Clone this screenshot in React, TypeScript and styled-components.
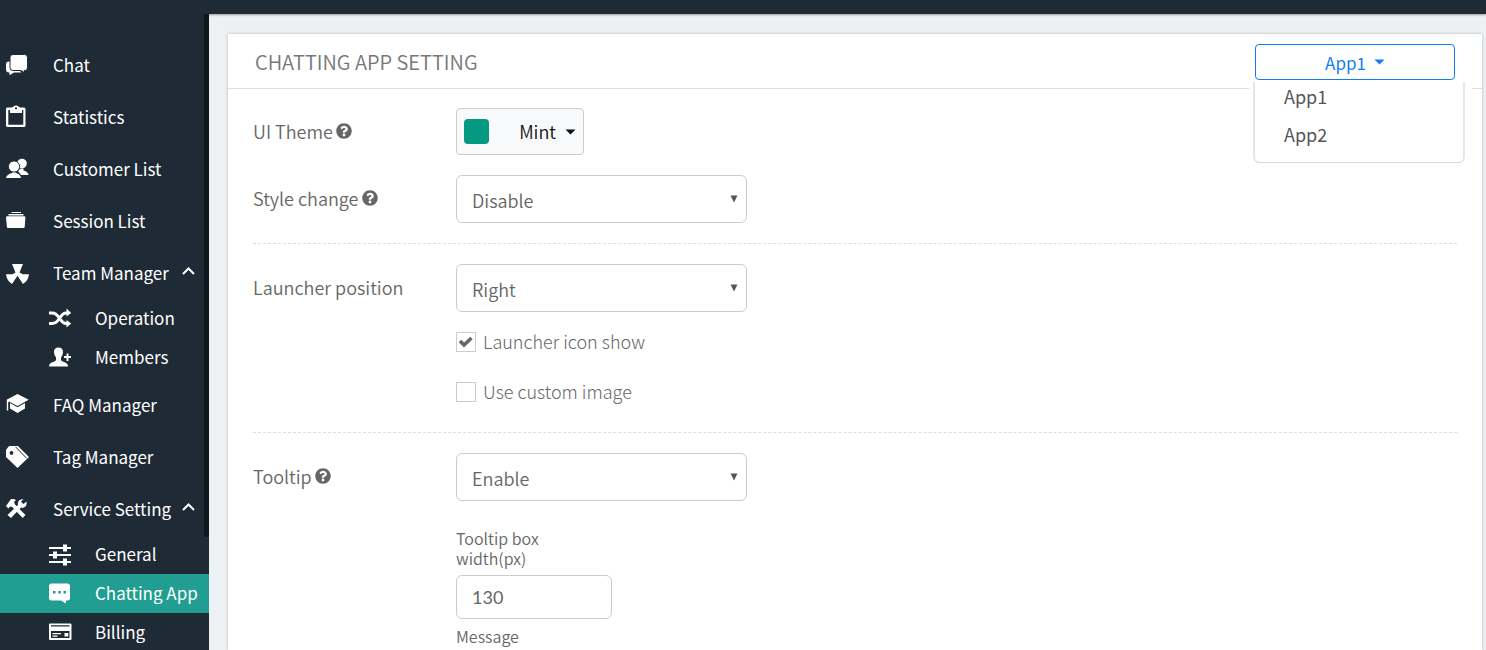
import React, { useState } from 'react';
import styled, { createGlobalStyle, css } from 'styled-components';
import { FaQuestionCircle } from 'react-icons/fa';

const GlobalStyle = createGlobalStyle`
  *, *::before, *::after { box-sizing: border-box; }
  html, body { margin: 0; padding: 0; }
  body {
    background: #edf1f3;
    color: #666;
    font-family: 'Noto Sans CJK KR', 'Noto Sans', sans-serif;
    overflow: hidden;
  }
  button, input, select { font-family: inherit; margin: 0; }
`;

const Page = styled.div`
  display: flex;
  flex-direction: column;
  height: 100vh;
  overflow: hidden;
`;

const TopBar = styled.header`
  flex: none;
  height: 14px;
  background: #1e2a35;
  box-shadow: 0 1px 2px rgba(0, 0, 0, 0.35);
`;

const Body = styled.div`
  display: flex;
  flex: 1;
  min-height: 0;
`;

const Sidebar = styled.nav`
  position: relative;
  flex: none;
  width: 209px;
  padding-top: 25px;
  background: #1e2a35;
  overflow: hidden;
`;

const ScrollThumb = styled.div`
  position: absolute;
  top: 0;
  right: 0;
  width: 5px;
  height: 523px;
  background: #10181f;
`;

const NavList = styled.ul`
  margin: 0;
  padding: 0;
  list-style: none;
`;

const SubList = styled(NavList)`
  padding-bottom: 2px;
`;

const NavText = styled.span`
  flex: 1;
  margin-left: 24px;
`;

const NavLink = styled.a<{ $sub?: boolean; $active?: boolean }>`
  display: flex;
  align-items: center;
  height: ${(p) => (p.$sub ? 39 : 52)}px;
  padding: 0 14px 0 ${(p) => (p.$sub ? 48 : 5)}px;
  background: ${(p) => (p.$active ? '#219e91' : 'transparent')};
  color: #fff;
  font-size: 17px;
  line-height: 24px;
  white-space: nowrap;
  text-decoration: none;

  svg { flex: none; }

  ${NavText} {
    margin-left: ${(p) => (p.$sub ? 23 : 24)}px;
    padding-bottom: ${(p) => (p.$sub ? 2 : 0)}px;
  }
`;

const Main = styled.main`
  display: flex;
  flex: 1;
  min-width: 0;
  padding: 20px 4px 0 19px;
`;

const Card = styled.section`
  flex: 1;
  min-width: 0;
  background: #fff;
  box-shadow: 0 0 3px rgba(0, 0, 0, 0.25);
`;

const CardHeader = styled.header`
  display: flex;
  align-items: center;
  justify-content: space-between;
  height: 55px;
  padding: 2px 27px 0;
  border-bottom: 1px solid #ddd;
`;

const Title = styled.h1`
  margin: 0;
  color: #777;
  font-size: 20px;
  font-weight: 350;
  line-height: 30px;
`;

const Picker = styled.div`
  position: relative;
  width: 200px;
`;

const PickerButton = styled.button`
  display: flex;
  align-items: center;
  justify-content: center;
  gap: 8px;
  width: 100%;
  height: 36px;
  padding: 0;
  border: 1px solid #0f7dfa;
  border-radius: 4px;
  background: #fff;
  color: #0f7dfa;
  font-size: 17px;
`;

const MenuBackdrop = styled.div`
  position: absolute;
  top: 38px;
  left: -6px;
  right: -17px;
  padding: 0 7px 0 4px;
  background: #fff;
`;

const Menu = styled.ul`
  margin: 0;
  padding: 0 0 4px;
  border: solid #e6e6e6;
  border-width: 0 2px 1px;
  border-bottom-color: #d8d8d8;
  border-radius: 0 0 6px 6px;
  list-style: none;
`;

const MenuItem = styled.button`
  display: block;
  width: 100%;
  height: 38px;
  padding: 0 29px 10px;
  border: 0;
  background: none;
  color: #555;
  font-size: 18px;
  line-height: 28px;
  text-align: left;
`;

const Section = styled.div`
  display: flex;
  flex-direction: column;
  gap: 20px;
  margin: 0 25px;
  padding: 20px 0;
  border-bottom: 1px dashed #ddd;

  &:first-of-type { padding-top: 19px; }
  &:last-child { border-bottom: 0; }
`;

const Row = styled.div`
  display: flex;
  align-items: flex-start;
`;

const RowLabel = styled.label`
  display: flex;
  align-items: center;
  gap: 3px;
  flex: none;
  width: 203px;
  height: 46px;
  font-size: 18px;
  font-weight: 350;
`;

const Controls = styled.div`
  display: flex;
  flex-direction: column;
  align-items: flex-start;
`;

const ThemeButton = styled.button`
  display: flex;
  align-items: center;
  width: 128px;
  height: 47px;
  padding: 0 7px;
  border: 1px solid #ccc;
  border-radius: 4px;
  background: #f8f9fb;
  color: #111;
  font-size: 18px;
  font-weight: 350;
`;

const Swatch = styled.span`
  width: 25px;
  height: 25px;
  margin-right: auto;
  border-radius: 4px;
  background: #049a81;
`;

const ThemeName = styled.span`
  margin-right: 9px;
  padding-bottom: 1px;
`;

const field = css`
  border: 1px solid #ccc;
  border-radius: 6px;
  background: #fff;
  color: #666;
  font-size: 18px;
  font-weight: 350;
`;

const SelectWrap = styled.div`
  position: relative;
  width: 291px;

  svg {
    position: absolute;
    top: 20px;
    right: 9px;
    pointer-events: none;
  }
`;

const Select = styled.select`
  ${field}
  appearance: none;
  display: block;
  width: 100%;
  height: 48px;
  padding: 1px 30px 0 15px;
`;

const CheckLabel = styled.label`
  display: flex;
  align-items: center;
  gap: 7px;
  height: 20px;
  margin-top: 20px;
  font-size: 18px;
  font-weight: 300;

  & + & {
    margin-top: 30px;
    margin-bottom: 10px;
  }
`;

const CheckText = styled.span`
  padding-bottom: 2px;
`;

const CheckBox = styled.span`
  display: grid;
  width: 20px;
  height: 20px;

  & > * { grid-area: 1 / 1; }
  svg { pointer-events: none; }
`;

const CheckInput = styled.input`
  appearance: none;
  width: 20px;
  height: 20px;
  border: 1px solid #ccc;
  background: #fff;

  & + svg { visibility: hidden; }
  &:checked + svg { visibility: visible; }
`;

const FieldLabel = styled.label`
  width: 130px;
  font-size: 16px;
  font-weight: 350;
  line-height: 20px;
`;

const TextInput = styled.input`
  ${field}
  width: 156px;
  height: 44px;
  margin: 7px 0;
  padding: 0 15px;
  font-family: Lato, sans-serif;
  font-weight: 400;
`;

const TooltipFields = styled.div`
  display: flex;
  flex-direction: column;
  margin-top: 27px;
`;

const glyphs = {
  chat: (
    <>
      <path d="M4 8.500H12V18H15L16.500 19.500H9L4.500 22.300V19.500H4Q1 19.500 1 16.500V11.500Q1 8.500 4 8.500Z" />
      <path
        d="M8 1.500H19.500Q22.500 1.500 22.500 4.500V14.500Q22.500 17 20.500 17.500H19V20.500Q18 17.500 15 17.500H8Q5 17.500 5 14.500V4.500Q5 1.500 8 1.500Z"
        stroke="#1e2a35"
      />
    </>
  ),
  clipboard: (
    <path
      fillRule="evenodd"
      d="M2.500 2.500H7L8.500 1.500Q11 -.5 13.500 1.500L15 2.500H19Q20.500 2.500 20.500 4V20.500Q20.500 22 19 22H2.500Q1 22 1 20.500V4Q1 2.500 2.500 2.500ZM3.300 5V19.700H18.300V5H17V8H5V5ZM11 2.200A1.100 1.100 0 1 0 11 4.400A1.100 1.100 0 1 0 11 2.200Z"
    />
  ),
  people: (
    <>
      <circle cx="17" cy="6.500" r="4.800" />
      <path d="M15.500 11.500H18.500V13.500Q23.500 15 23.500 18H16L13 14Z" />
      <g stroke="#1e2a35" strokeWidth="1">
        <path d="M7 13.500H11V15.500Q16 17 16.500 21.500H.5Q1 17 7 15.500Z" />
        <circle cx="9" cy="9.500" r="5.600" />
      </g>
    </>
  ),
  folder: (
    <path d="M6.500 3H16V4H6.500ZM3.500 5H18.500V6.500H3.500ZM2.500 7.300H19.500Q20.500 7.300 20.400 8.500L19.700 18Q19.600 19 18.700 19H3Q2 19 1.900 18L1 8.500Q1 7.300 2.500 7.300Z" />
  ),
  nuclear: (
    <>
      <path d="M7 3H18L14.500 11.500L18 13.300H24Q23.500 19.500 18 23L12.500 14.800L7 23Q1.500 19.500 1 13.300H7.500L10.500 11.500Z" />
    </>
  ),
  shuffle: (
    <>
      <path d="M1 6H4Q8 6 11 10.500L12.500 12.500Q15 16.500 18 16.500H20M1 16.500H4Q8 16.500 11 12L12.500 10Q15 6 18 6H20" fill="none" stroke="currentColor" strokeWidth="3" />
      <path d="M18.500 1.500L23.200 6L18.500 9.500ZM18.500 13L23.200 16.500L18.500 20.500Z" />
    </>
  ),
  personAdd: (
    <path d="M10.500 1.500Q15 1.500 15 6Q15 9 13 11.500V14Q13 15 16 16Q20 17.300 20 20.500H1Q1 17.300 5 16Q8 15 8 14V11.500Q6 9 6 6Q6 1.500 10.500 1.500ZM18.500 7.500H20.500V10H23V12H20.500V15H18.500V12H16V10H18.500Z" />
  ),
  school: (
    <>
      <path d="M12.500 1L23.700 6.700L12.500 13L4 8.500L3.200 9.500V17.500H1.800V7.500L1.500 6.700Z" />
      <path d="M5 10L12.500 14.300L20 10V15.500L12.500 20L5 15.500Z" />
    </>
  ),
  tag: (
    <>
      <path fillRule="evenodd" d="M4 1H13L24 12L12.500 23L1 12V5ZM6.500 6A1.900 1.900 0 1 0 6.500 9.800A1.900 1.900 0 1 0 6.500 6Z" />
      <path d="M10.500 1.800L21.700 13.300" fill="none" stroke="#1e2a35" strokeWidth="1" />
    </>
  ),
  tools: (
    <>
      <path d="M6 2Q9 1.500 11 3L9 5L10 7.500L20.500 18L17.700 21L7.200 10L5 9.500L3.500 11.500L1 9Z" />
      <path d="M18.500 2L16 4.700L18.500 7L21.500 4.500Q22.500 9 19 10.500Q17.500 11 16 10.500L6 21L2.500 18L13 8Q12 2.500 18.500 2Z" />
    </>
  ),
  options: (
    <path d="M1 4H15V1.500H19V4H23V6H19V8.500H15V6H1ZM1 11H5V8.500H9V11H23V13H9V15.500H5V13H1ZM1 18H15V15.500H19V18H23V20H19V22.500H15V20H1Z" />
  ),
  chatbox: (
    <path
      fillRule="evenodd"
      d="M3.500 1.500H19.500Q22 1.500 22 4V16Q22 18.500 19.500 18.500H18V21.500L13 18.500H3.500Q1 18.500 1 16V4Q1 1.500 3.500 1.500ZM5 9V11.500H7.500V9ZM10.300 9V11.500H12.800V9ZM15.500 9V11.500H18V9Z"
    />
  ),
  card: (
    <path
      fillRule="evenodd"
      d="M2 2.500H22.500Q23.500 2.500 23.500 3.500V18Q23.500 19 22.500 19H2Q1 19 1 18V3.500Q1 2.500 2 2.500ZM3 4.200V5.500H21.500V4.200ZM3 10V17H21.500V10ZM4.500 12H13V13.200H4.500ZM4.500 14.500H9.500V15.700H4.500ZM16.500 12H20.300V15.500H16.500Z"
    />
  ),
};

type GlyphName = keyof typeof glyphs;

const Glyph = ({ name }: { name: GlyphName }) => (
  <svg width="24" height="24" viewBox="0 0 24 24" fill="currentColor" aria-hidden="true">
    {glyphs[name]}
  </svg>
);

const Chevron = () => (
  <svg width="13" height="14" viewBox="0 0 13 14" fill="none" stroke="currentColor" strokeWidth="2" aria-hidden="true">
    <path d="M1 8L6.500 2.500L12 8" />
  </svg>
);

const Caret = () => (
  <svg width="11" height="6" viewBox="0 0 11 6" fill="currentColor" aria-hidden="true">
    <path d="M.5 .5H10.500L5.500 5.500Z" />
  </svg>
);

interface NavItem {
  icon: GlyphName;
  text: string;
  active?: boolean;
  children?: NavItem[];
}

const navigation: NavItem[] = [
  { icon: 'chat', text: 'Chat' },
  { icon: 'clipboard', text: 'Statistics' },
  { icon: 'people', text: 'Customer List' },
  { icon: 'folder', text: 'Session List' },
  {
    icon: 'nuclear',
    text: 'Team Manager',
    children: [
      { icon: 'shuffle', text: 'Operation' },
      { icon: 'personAdd', text: 'Members' },
    ],
  },
  { icon: 'school', text: 'FAQ Manager' },
  { icon: 'tag', text: 'Tag Manager' },
  {
    icon: 'tools',
    text: 'Service Setting',
    children: [
      { icon: 'options', text: 'General' },
      { icon: 'chatbox', text: 'Chatting App', active: true },
      { icon: 'card', text: 'Billing' },
    ],
  },
];

const NavEntry = ({ item, sub }: { item: NavItem; sub?: boolean }) => (
  <li>
    <NavLink href="#" $sub={sub} $active={item.active}>
      <Glyph name={item.icon} />
      <NavText>{item.text}</NavText>
      {item.children && <Chevron />}
    </NavLink>
    {item.children && (
      <SubList>
        {item.children.map((child) => (
          <NavEntry key={child.text} item={child} sub />
        ))}
      </SubList>
    )}
  </li>
);

const SelectField = ({ id, options, initial }: { id: string; options: string[]; initial: string }) => (
  <SelectWrap>
    <Select id={id} defaultValue={initial}>
      {options.map((option) => (
        <option key={option}>{option}</option>
      ))}
    </Select>
    <svg width="8" height="8" viewBox="0 0 8 8" fill="#555" aria-hidden="true">
      <path d="M.5 .5H7.500L4 7.500Z" />
    </svg>
  </SelectWrap>
);

const CheckField = ({ text, initial }: { text: string; initial?: boolean }) => (
  <CheckLabel>
    <CheckBox>
      <CheckInput type="checkbox" defaultChecked={initial} />
      <svg width="20" height="20" viewBox="0 0 20 20" fill="none" stroke="#666" strokeWidth="3.600" aria-hidden="true">
        <path d="M4 9L8 13L15.500 6" />
      </svg>
    </CheckBox>
    <CheckText>{text}</CheckText>
  </CheckLabel>
);

export default function App() {
  const [app, setApp] = useState('App1');

  return (
    <Page>
      <GlobalStyle />
      <TopBar />
      <Body>
        <Sidebar>
          <ScrollThumb />
          <NavList>
            {navigation.map((item) => (
              <NavEntry key={item.text} item={item} />
            ))}
          </NavList>
        </Sidebar>
        <Main>
          <Card>
            <CardHeader>
              <Title>CHATTING APP SETTING</Title>
              <Picker>
                <PickerButton type="button">
                  {app}
                  <Caret />
                </PickerButton>
                <MenuBackdrop>
                  <Menu>
                    {['App1', 'App2'].map((name) => (
                      <li key={name}>
                        <MenuItem type="button" onClick={() => setApp(name)}>
                          {name}
                        </MenuItem>
                      </li>
                    ))}
                  </Menu>
                </MenuBackdrop>
              </Picker>
            </CardHeader>
            <Section>
              <Row>
                <RowLabel htmlFor="theme">
                  UI Theme <FaQuestionCircle size={16} />
                </RowLabel>
                <ThemeButton id="theme" type="button">
                  <Swatch />
                  <ThemeName>Mint</ThemeName>
                  <Caret />
                </ThemeButton>
              </Row>
              <Row>
                <RowLabel htmlFor="style">
                  Style change <FaQuestionCircle size={16} />
                </RowLabel>
                <SelectField id="style" options={['Disable', 'Enable']} initial="Disable" />
              </Row>
            </Section>
            <Section>
              <Row>
                <RowLabel htmlFor="position">Launcher position</RowLabel>
                <Controls>
                  <SelectField id="position" options={['Left', 'Right']} initial="Right" />
                  <CheckField text="Launcher icon show" initial />
                  <CheckField text="Use custom image" />
                </Controls>
              </Row>
            </Section>
            <Section>
              <Row>
                <RowLabel htmlFor="tooltip">
                  Tooltip <FaQuestionCircle size={16} />
                </RowLabel>
                <Controls>
                  <SelectField id="tooltip" options={['Disable', 'Enable']} initial="Enable" />
                  <TooltipFields>
                    <FieldLabel htmlFor="width">Tooltip box width(px)</FieldLabel>
                    <TextInput id="width" type="text" defaultValue="130" />
                    <FieldLabel htmlFor="message">Message</FieldLabel>
                    <TextInput id="message" type="text" />
                  </TooltipFields>
                </Controls>
              </Row>
            </Section>
          </Card>
        </Main>
      </Body>
    </Page>
  );
}
